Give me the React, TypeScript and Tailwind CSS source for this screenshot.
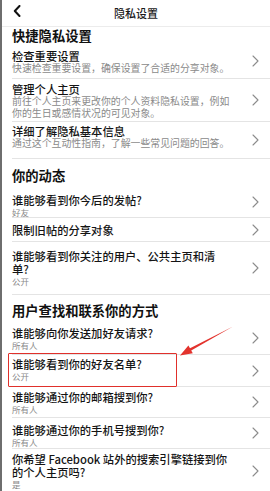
import React from 'react';

// 行数据：h = 行高（含分隔线），pt = 标题上边距
type Row = {
    title: React.ReactNode;
    sub?: React.ReactNode;
    value?: string;
    h: string;
    pt: string;
    boxed?: boolean;
};

const Chevron = () => (
    <svg width="7" height="12" viewBox="0 0 7 12" className="shrink-0 self-center">
        <path d="M1 1 L6 6 L1 11" fill="none" stroke="#8c8c8c" strokeWidth="1.1" strokeLinecap="round" strokeLinejoin="round" />
    </svg>
);

const SettingRow = ({ row }: { row: Row }) => (
    <div className={`relative ml-[10px] flex shrink-0 border-b border-[#e4e4e4] pr-[11px] ${row.h}`}>
        {row.boxed && (
            <div className="pointer-events-none absolute left-[-4px] top-[-2px] h-[34px] w-[169px] border-[1.5px] border-[#e0302b] rounded-[1px]"></div>
        )}
        <div className={`min-w-0 flex-1 ${row.pt}`}>
            <div className="text-[11.3px] leading-[13px] font-medium text-[#141414]">{row.title}</div>
            {row.sub && <div className="text-[9.9px] leading-[11.5px] text-[#8a8a8a]">{row.sub}</div>}
            {row.value && <div className="text-[8.5px] leading-[11px] text-[#8a8a8a]">{row.value}</div>}
        </div>
        <Chevron />
    </div>
);

const Heading = ({ text, h, pt }: { text: string; h: string; pt: string }) => (
    <h2 className={`ml-[10px] shrink-0 text-[13.3px] leading-[18px] font-semibold text-[#111] ${h} ${pt}`}>{text}</h2>
);

const App: React.FC = () => {
    return (
        <div
            className="relative flex h-[491px] w-[270px] flex-col overflow-hidden border-l-2 border-[#6e6e6e] bg-white"
            style={{ fontFamily: '"Noto Sans CJK SC", "Noto Sans", sans-serif' }}
        >
            {/* 顶部导航 */}
            <div className="relative flex h-[27px] shrink-0 items-center justify-center border-b border-[#ececec]">
                <svg width="8" height="12" viewBox="0 0 8 12" className="absolute left-[11px] top-[5px]">
                    <path d="M6.5 1 L1.8 6 L6.5 11" fill="none" stroke="#111" strokeWidth="2" strokeLinecap="round" strokeLinejoin="round" />
                </svg>
                <span className="text-[11px] font-medium text-[#1a1a1a]">隐私设置</span>
            </div>

            <Heading text="快捷隐私设置" h="h-[17px]" pt="pt-0" />
            <SettingRow row={{ title: '检查重要设置', sub: '快速检查重要设置，确保设置了合适的分享对象。', h: 'h-[35px]', pt: 'pt-[6px]' }} />
            <SettingRow
                row={{
                    title: '管理个人主页',
                    sub: (
                        <>
                            前往个人主页来更改你的个人资料隐私设置，例如
                            <br />
                            你的生日或感情状况的可见对象。
                        </>
                    ),
                    h: 'h-[43px]',
                    pt: 'pt-[4px]',
                }}
            />
            <SettingRow row={{ title: '详细了解隐私基本信息', sub: '通过这个互动性指南，了解一些常见问题的回答。', h: 'h-[37px]', pt: 'pt-[3px]' }} />

            <Heading text="你的动态" h="h-[28px]" pt="pt-[8px]" />
            <SettingRow row={{ title: '谁能够看到你今后的发帖?', value: '好友', h: 'h-[31px]', pt: 'pt-[7px]' }} />
            <SettingRow row={{ title: '限制旧帖的分享对象', h: 'h-[24px]', pt: 'pt-[6px]' }} />
            <SettingRow
                row={{
                    title: (
                        <>
                            谁能够看到你关注的用户、公共主页和清
                            <br />
                            单?
                        </>
                    ),
                    value: '公开',
                    h: 'h-[53px]',
                    pt: 'pt-[8px]',
                }}
            />

            <Heading text="用户查找和联系你的方式" h="h-[27px]" pt="pt-[7px]" />
            <SettingRow row={{ title: '谁能够向你发送加好友请求?', value: '所有人', h: 'h-[33px]', pt: 'pt-[5px]' }} />
            <SettingRow row={{ title: '谁能够看到你的好友名单?', value: '公开', h: 'h-[32px]', pt: 'pt-[3px]', boxed: true }} />
            <SettingRow row={{ title: '谁能够通过你的邮箱搜到你?', value: '所有人', h: 'h-[31px]', pt: 'pt-[4px]' }} />
            <SettingRow row={{ title: '谁能够通过你的手机号搜到你?', value: '所有人', h: 'h-[31px]', pt: 'pt-[6px]' }} />
            <SettingRow
                row={{
                    title: (
                        <>
                            你希望 Facebook 站外的搜索引擎链接到你
                            <br />
                            的个人主页吗?
                        </>
                    ),
                    value: '是',
                    h: 'h-[44px]',
                    pt: 'pt-[4px]',
                }}
            />

            {/* 红色箭头标注 */}
            <svg width="60" height="36" viewBox="0 0 60 36" className="pointer-events-none absolute left-[174px] top-[323px]">
                <path d="M57 3.5 L15.2 27.4 L16.8 30.2 L4 32.5 L12.4 22.5 L14 25.2 Z" fill="#e3332d" />
            </svg>
        </div>
    );
};

export default App;
